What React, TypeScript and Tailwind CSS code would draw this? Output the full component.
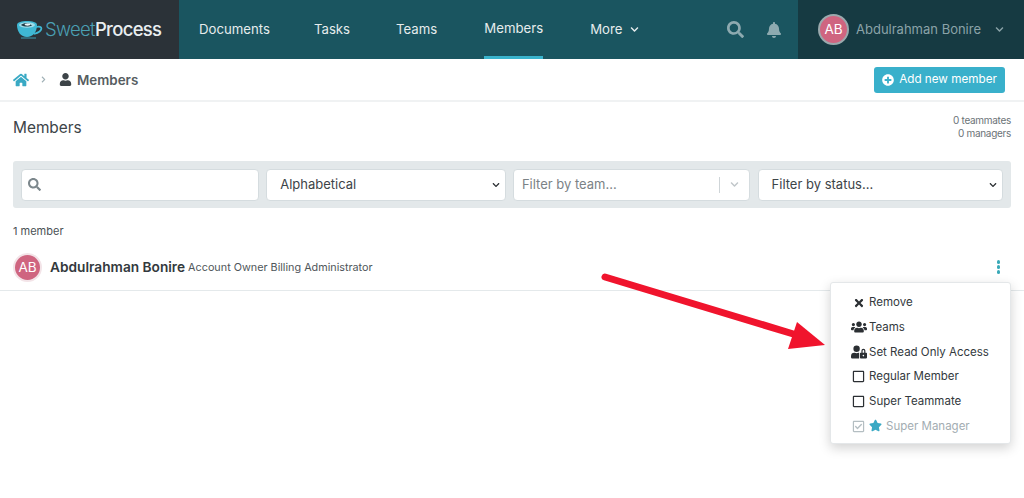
import React from "react";
import { FaHome, FaUser, FaSearch, FaBell, FaPlusCircle, FaTimes, FaUsers, FaUserLock, FaRegSquare, FaRegCheckSquare, FaStar, FaChevronDown, FaChevronRight } from "react-icons/fa";

function Logo() {
  return (
    <svg width="29" height="18" viewBox="0 0 29 18" className="shrink-0">
      <path d="M1 4 C1 1 6 0 11 0 C16 0 21 1 21 4 C21 11 17 16 11 16 C5 16 1 11 1 4Z" fill="#3fb8d4" />
      <ellipse cx="11" cy="4" rx="8" ry="2.8" fill="#9fdce9" />
      <path d="M5 4 C8 1.5 13 2 16 4.5 C13 6 8 6 5 4Z" fill="#1f3a44" />
      <ellipse cx="11.5" cy="3.6" rx="3" ry="1.1" fill="#eef8fa" />
      <path d="M20 6 C27 4 28 10 18 13" fill="none" stroke="#3fb8d4" strokeWidth="1.8" />
      <path d="M5 17 H20" stroke="#3a8ea1" strokeWidth="1.2" />
    </svg>
  );
}

function Avatar({ size }: { size: "lg" | "sm" }) {
  return (
    <div className={size === "lg"
      ? "w-[31px] h-[31px] rounded-full bg-[#cf6580] border-2 border-[#9ba9ad] flex items-center justify-center text-white text-[13.5px] shrink-0"
      : "w-[29px] h-[29px] rounded-full bg-[#cf6580] border-2 border-[#f3e4e8] flex items-center justify-center text-white text-[13.5px] shrink-0"}>AB</div>
  );
}

function SelectBox({ label }: { label: string }) {
  return (
    <div className="h-[32px] bg-white rounded border border-[#d5dcdf] flex items-center pl-[13px] pr-[5px] text-[13px] text-[#3d4448]">
      <span className="flex-1 pt-[1px]">{label}</span>
      <FaChevronDown className="text-[8px] text-[#2b2f33]" />
    </div>
  );
}

function MenuRow({ icon, label, muted }: { icon: React.ReactNode; label: string; muted?: boolean }) {
  return (
    <div className={muted ? "h-[24.8px] flex items-center pl-[20px] text-[#a3adb2]" : "h-[24.8px] flex items-center pl-[20px] text-[#33393d]"}>
      <span className="w-[16px] mr-[2px] flex justify-center shrink-0">{icon}</span>
      <span>{label}</span>
    </div>
  );
}

export default function App() {
  return (
    <div className="relative w-[1024px] h-[498px] overflow-hidden bg-white font-['Inter','Liberation_Sans',sans-serif]">
      <header className="h-[59px] flex bg-[#1a5560] text-[13.2px]">
        <div className="w-[179px] bg-[#2b3238] flex items-center pl-[16px]">
          <Logo />
          <span className="text-[18.5px] tracking-[-0.7px] text-[#4a9fb2] font-light">Sweet</span>
          <span className="text-[18.5px] tracking-[-0.7px] text-[#e9eef0] font-medium">Process</span>
        </div>
        <nav className="flex flex-1 text-[#e6eced] ml-[20px]">
          <div className="flex items-center">Documents</div>
          <div className="flex items-center ml-[44px]">Tasks</div>
          <div className="flex items-center ml-[46px]">Teams</div>
          <div className="flex items-center ml-[47px] pt-[1px] border-b-[3px] border-[#39b3cc]">Members</div>
          <div className="flex items-center ml-[47px] gap-[8px]">More <FaChevronDown className="text-[9px]" /></div>
        </nav>
        <div className="flex items-center gap-[22px] pr-[16px] text-[#8eaab0]">
          <FaSearch className="text-[17px]" />
          <FaBell className="text-[16px]" />
        </div>
        <div className="w-[226px] bg-[#163a42] flex items-center pl-[20px] text-[#8ba3a8]">
          <Avatar size="lg" />
          <span className="ml-[7px] text-[13px]">Abdulrahman Bonire</span>
          <FaChevronDown className="text-[9px] ml-[14px]" />
        </div>
      </header>

      <div className="h-[43px] border-b-2 border-[#f0f2f3] flex items-center pl-[13px] pr-[19px]">
        <FaHome className="text-[16px] text-[#39a9c4]" />
        <FaChevronRight className="text-[7px] text-[#9fb0b5] ml-[11px]" />
        <FaUser className="text-[13px] text-[#3d4448] ml-[12px]" />
        <span className="ml-[5px] pt-[1px] text-[13.4px] font-semibold text-[#565d61]">Members</span>
        <button className="ml-auto w-[131px] h-[26px] rounded-[3px] bg-[#39b0cb] text-white text-[11.7px] flex items-center justify-center gap-[5px]">
          <FaPlusCircle className="text-[12px]" />
          <span className="pt-[1px]">Add new member</span>
        </button>
      </div>

      <section className="px-[13px]">
        <div className="flex justify-between h-[59px] pt-[8px]">
          <h1 className="text-[15.4px] text-[#3d4448] pt-[6px]">Members</h1>
          <div className="text-right text-[10px] leading-[13px] tracking-[-0.3px] text-[#6b7377] pt-[4px]">
            <div>0 teammates</div>
            <div>0 managers</div>
          </div>
        </div>

        <div className="h-[47px] bg-[#e3e8ea] rounded-[3px] grid grid-cols-[238px_239.5px_237.5px_245px] gap-[7.2px] items-center px-[8px]">
          <div className="h-[32px] bg-white rounded border border-[#d5dcdf] flex items-center pl-[6px]">
            <FaSearch className="text-[13px] text-[#7c878c]" />
          </div>
          <SelectBox label="Alphabetical" />
          <div className="h-[32px] bg-white rounded border border-[#d5dcdf] flex items-center pl-[8px] text-[13px] text-[#7b8286]">
            <span className="flex-1 pt-[1px]">Filter by team...</span>
            <span className="w-px h-[16px] bg-[#cfd5d8]" />
            <FaChevronDown className="text-[9px] text-[#c0c6c9] mx-[10px]" />
          </div>
          <SelectBox label="Filter by status..." />
        </div>

        <p className="mt-[16px] text-[11px] leading-[14px] text-[#4a5155]">1 member</p>
      </section>

      <div className="mt-[10px] h-[43px] border-b border-[#e4e9eb] flex items-center pl-[13px] pr-[24px] pb-[4px]">
        <Avatar size="sm" />
        <span className="ml-[8px] pt-[1px] text-[13.7px] font-semibold text-[#33393d]">Abdulrahman Bonire</span>
        <span className="ml-[3px] pt-[3px] text-[10.8px] text-[#4f565a]">Account Owner Billing Administrator</span>
        <div className="ml-auto flex flex-col gap-[1.5px]">
          <span className="w-[3.5px] h-[3.5px] rounded-full bg-[#39a9b8]" />
          <span className="w-[3.5px] h-[3.5px] rounded-full bg-[#39a9b8]" />
          <span className="w-[3.5px] h-[3.5px] rounded-full bg-[#39a9b8]" />
        </div>
      </div>

      <div className="absolute left-[830px] top-[282px] w-[181px] h-[162px] bg-white rounded-[3px] border border-[#e4e7e9] shadow-[0_4px_12px_rgba(0,0,0,0.18)] pt-[7.2px] text-[11.5px]">
        <MenuRow icon={<FaTimes className="text-[12px] text-[#2b2f33]" />} label="Remove" />
        <MenuRow icon={<FaUsers className="text-[16px] text-[#2b2f33]" />} label="Teams" />
        <MenuRow icon={<FaUserLock className="text-[16px] text-[#2b2f33]" />} label="Set Read Only Access" />
        <MenuRow icon={<FaRegSquare className="text-[13px] text-[#2b2f33] -translate-x-[1px]" />} label="Regular Member" />
        <MenuRow icon={<FaRegSquare className="text-[13px] text-[#2b2f33] -translate-x-[1px]" />} label="Super Teammate" />
        <MenuRow
          muted
          icon={<FaRegCheckSquare className="text-[13px] text-[#b4bec2] -translate-x-[1px]" />}
          label=""
        />
        <FaStar className="absolute left-[38px] top-[136px] text-[13px] text-[#39a9c4]" />
        <span className="absolute left-[55px] top-[135px] text-[11.5px] text-[#a3adb2]">Super Manager</span>
      </div>

      <svg className="absolute left-0 top-0 pointer-events-none" width="1024" height="498">
        <line x1="605" y1="277" x2="800" y2="336" stroke="#f0142d" strokeWidth="7" strokeLinecap="round" />
        <polygon points="825,345 797,322 788,349" fill="#f0142d" />
      </svg>
    </div>
  );
}
